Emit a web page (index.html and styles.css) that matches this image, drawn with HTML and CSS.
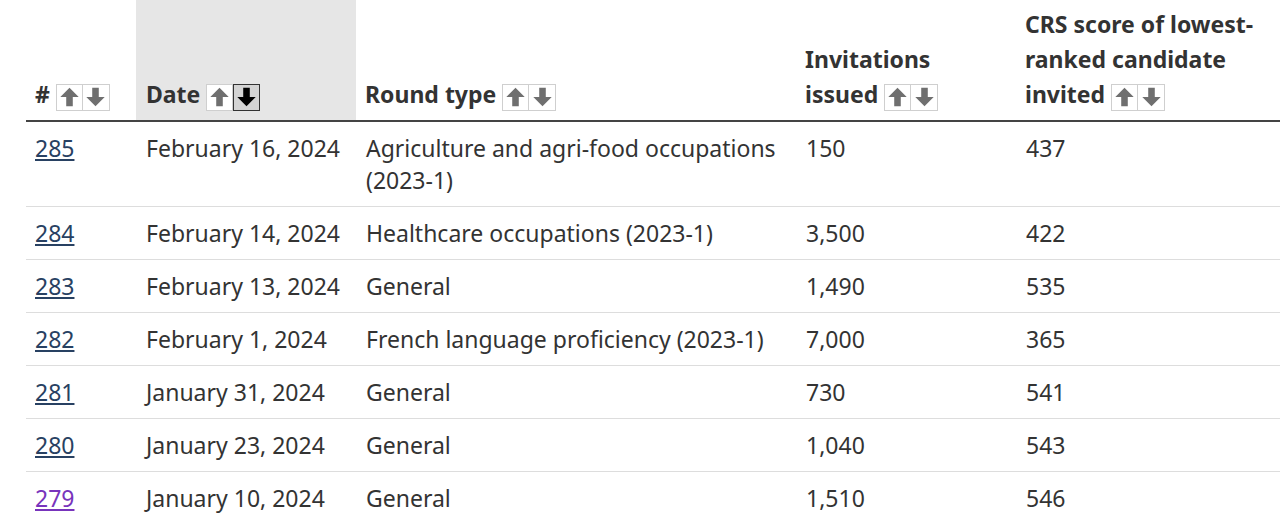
FILE: index.html
```html
<!DOCTYPE html>
<html lang="en">
<head>
<meta charset="utf-8">
<title>Rounds of invitations</title>
<link rel="stylesheet" href="styles.css">
</head>
<body>
<main class="page">
  <table class="rounds">
    <colgroup>
      <col class="c-num"><col class="c-date"><col class="c-type"><col class="c-inv"><col class="c-crs">
    </colgroup>
    <thead>
      <tr>
        <th># <span class="sort"><span class="btn"><svg viewBox="0 0 16 16"><path d="M8 1L15 8H10.5V15H5.5V8H1Z"/></svg></span><span class="btn"><svg viewBox="0 0 16 16"><path d="M8 15L15 8H10.5V1H5.5V8H1Z"/></svg></span></span></th>
        <th class="sorted">Date <span class="sort"><span class="btn"><svg viewBox="0 0 16 16"><path d="M8 1L15 8H10.5V15H5.5V8H1Z"/></svg></span><span class="btn active"><svg viewBox="0 0 16 16"><path d="M8 15L15 8H10.5V1H5.5V8H1Z"/></svg></span></span></th>
        <th>Round type <span class="sort"><span class="btn"><svg viewBox="0 0 16 16"><path d="M8 1L15 8H10.5V15H5.5V8H1Z"/></svg></span><span class="btn"><svg viewBox="0 0 16 16"><path d="M8 15L15 8H10.5V1H5.5V8H1Z"/></svg></span></span></th>
        <th>Invitations issued <span class="sort"><span class="btn"><svg viewBox="0 0 16 16"><path d="M8 1L15 8H10.5V15H5.5V8H1Z"/></svg></span><span class="btn"><svg viewBox="0 0 16 16"><path d="M8 15L15 8H10.5V1H5.5V8H1Z"/></svg></span></span></th>
        <th>CRS score of lowest-ranked candidate invited <span class="sort"><span class="btn"><svg viewBox="0 0 16 16"><path d="M8 1L15 8H10.5V15H5.5V8H1Z"/></svg></span><span class="btn"><svg viewBox="0 0 16 16"><path d="M8 15L15 8H10.5V1H5.5V8H1Z"/></svg></span></span></th>
      </tr>
    </thead>
    <tbody>
      <tr><td><a href="#r285">285</a></td><td>February 16, 2024</td><td>Agriculture and agri-food occupations (2023-1)</td><td>150</td><td>437</td></tr>
      <tr><td><a href="#r284">284</a></td><td>February 14, 2024</td><td>Healthcare occupations (2023-1)</td><td>3,500</td><td>422</td></tr>
      <tr><td><a href="#r283">283</a></td><td>February 13, 2024</td><td>General</td><td>1,490</td><td>535</td></tr>
      <tr><td><a href="#r282">282</a></td><td>February 1, 2024</td><td>French language proficiency (2023-1)</td><td>7,000</td><td>365</td></tr>
      <tr><td><a href="#r281">281</a></td><td>January 31, 2024</td><td>General</td><td>730</td><td>541</td></tr>
      <tr><td><a href="#r280">280</a></td><td>January 23, 2024</td><td>General</td><td>1,040</td><td>543</td></tr>
      <tr><td><a class="visited" href="#r279">279</a></td><td>January 10, 2024</td><td>General</td><td>1,510</td><td>546</td></tr>
    </tbody>
  </table>
</main>
</body>
</html>
```

FILE: styles.css
```css
html, body {
  margin: 0;
  padding: 0;
  background: #fff;
  overflow: hidden;
}
body {
  font-family: "Noto Sans", "Open Sans", sans-serif;
  font-size: 23px;
  color: #333;
}
.page {
  padding-left: 26px;
}
.rounds {
  width: 1270px;
  border-collapse: collapse;
  table-layout: fixed;
}
.c-num { width: 110px; }
.c-date { width: 220px; }
.c-type { width: 440px; }
.c-inv { width: 220px; }
.c-crs { width: 280px; }

.rounds th {
  text-align: left;
  vertical-align: bottom;
  font-weight: 700;
  line-height: 35px;
  padding: 7px 10px 8px 9px;
  border-bottom: 2px solid #444;
}
.rounds th.sorted {
  background: #e6e6e6;
  padding-left: 10px;
}
.rounds td {
  vertical-align: top;
  line-height: 32px;
  padding: 10px 10px 10px 10px;
  border-bottom: 1px solid #ddd;
}
.rounds td:first-child {
  padding-left: 9px;
}
.rounds a {
  color: #284162;
  text-decoration: underline;
}
.rounds a.visited {
  color: #7834bc;
}
.sort {
  display: inline-flex;
  vertical-align: -5px;
  line-height: 0;
}
.btn {
  width: 27px;
  height: 27px;
  box-sizing: border-box;
  border: 1px solid #cfcfcf;
  background: #fff;
  display: flex;
  align-items: center;
  justify-content: center;
}
.btn + .btn {
  border-left: none;
}
.btn svg {
  width: 21px;
  height: 22px;
  fill: #6f6f6f;
}
.btn.active {
  background: #d4d4d4;
  border: 1px solid #333;
}
.btn.active svg {
  fill: #000;
}
```
